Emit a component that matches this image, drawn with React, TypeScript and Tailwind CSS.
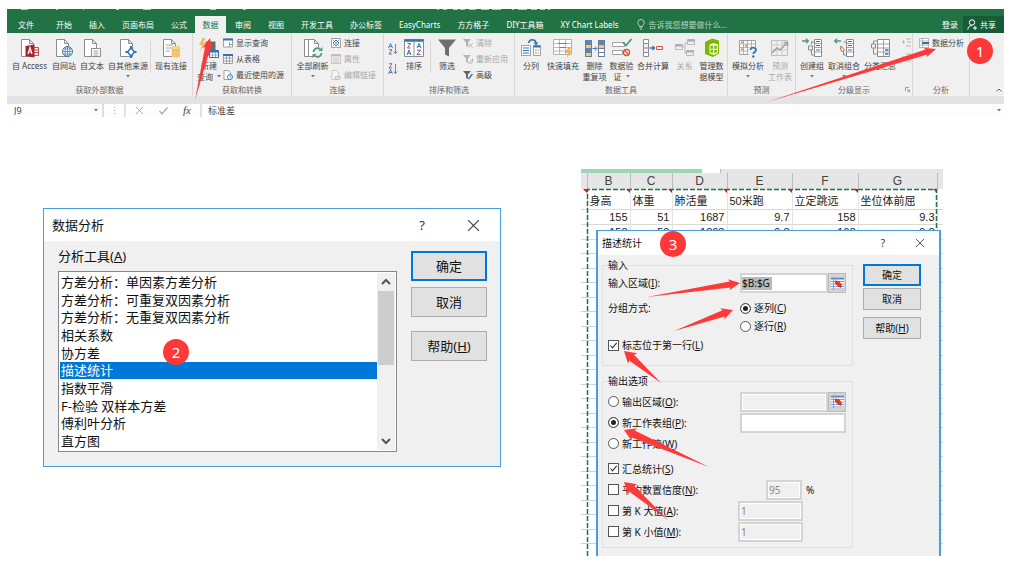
import React from "react";

const GREEN = "#217346";
const GREY = "#8c8c8c";
const BLUE = "#2f75b5";

/* ---------- annotations ---------- */

type ArrowProps = { x1: number; y1: number; x2: number; y2: number; size?: number };

function Arrow({ x1, y1, x2, y2, size = 1 }: ArrowProps) {
  const len = Math.hypot(x2 - x1, y2 - y1);
  const ux = (x2 - x1) / len;
  const uy = (y2 - y1) / len;
  const at = (back: number, side: number) =>
    `${(x2 - ux * back - uy * side).toFixed(1)},${(y2 - uy * back + ux * side).toFixed(1)}`;
  const points = [
    `${x1},${y1}`,
    at(10, 2.7 * size),
    at(11.5, 5 * size),
    `${x2},${y2}`,
    at(11.5, -5 * size),
    at(10, -2.7 * size),
  ].join(" ");
  return <polygon points={points} fill="#fc3a3a" />;
}

function Badge({ children, place }: { children: React.ReactNode; place: string }) {
  return (
    <span
      className={`absolute z-20 flex size-[26px] items-center justify-center rounded-full bg-[#fc3838] text-[15px] leading-none text-white ${place}`}
    >
      {children}
    </span>
  );
}

/* ---------- ribbon icons ---------- */

function Ic({ children }: { children: React.ReactNode }) {
  return (
    <svg viewBox="0 0 20 20" className="size-5 shrink-0" fill="none" aria-hidden="true">
      {children}
    </svg>
  );
}

function Sm({ children }: { children: React.ReactNode }) {
  return (
    <svg viewBox="0 0 10 10" className="size-[10px] shrink-0" fill="none" aria-hidden="true">
      {children}
    </svg>
  );
}

const Doc = () => (
  <path d="M2.500 1.500h8l4 4v13h-12zM10.500 1.500v4h4" fill="#fff" stroke={GREY} />
);

const icons = {
  access: (
    <Ic>
      <path d="M1.500 1.500h8l4 4v13h-12zM9.500 1.500v4h4" fill="#fff" stroke={GREY} />
      <path d="M14 9.500h4.500v8H14M14 12h4M14 14.500h4" stroke="#c0504d" />
      <path d="M5.500 8l9-1.500v13l-9-1.500z" fill="#a4262c" />
      <path d="M8 16l2-6.500 2 6.500M8.700 14h2.600" stroke="#fff" strokeWidth="1.200" />
    </Ic>
  ),
  web: (
    <Ic>
      <Doc />
      <circle cx="13.500" cy="13.500" r="5" fill="#fff" stroke={BLUE} />
      <path d="M8.500 13.500h10M13.500 8.500v10M9.500 11h8M9.500 16h8" stroke={BLUE} strokeWidth=".7" />
      <ellipse cx="13.500" cy="13.500" rx="2.400" ry="5" stroke={BLUE} strokeWidth=".7" />
    </Ic>
  ),
  text: (
    <Ic>
      <Doc />
      <path d="M9.500 10.500h9v8h-9z" fill="#fff" stroke={GREY} />
      <path d="M11.500 13h5M11.500 15h5M11.500 17h5" stroke={GREY} strokeWidth=".8" />
    </Ic>
  ),
  other: (
    <Ic>
      <Doc />
      <path d="M13 10l3.500 4-3.500 4-3.500-4z" fill="#fff" stroke={BLUE} strokeWidth="1.500" />
      <path d="M13 8v3M13 17v3M7.500 14h3M15.500 14h3" stroke={BLUE} strokeWidth="2" />
    </Ic>
  ),
  existing: (
    <Ic>
      <Doc />
      <path d="M5 7h7M5 10h5M5 13h4" stroke={GREY} strokeWidth=".8" />
      <path d="M10.500 10v8c0 2 8.500 2 8.500 0v-8z" fill="#f3c66b" />
      <ellipse cx="14.750" cy="10" rx="4.250" ry="1.700" fill="#f8dc9c" stroke="#e0ab3f" strokeWidth=".6" />
    </Ic>
  ),
  newQuery: (
    <Ic>
      <path d="M6.500 3.500h10v14h-10z" fill="#6b6b6b" />
      <path d="M3.500 0L0 7h3l-2 6 6-8H4l2.500-5z" fill="#f3b95f" />
      <path d="M10.500 12.500h9v7h-9z" fill="#fff" stroke={BLUE} />
      <path d="M10.500 13.500h9" stroke={BLUE} strokeWidth="2" />
      <path d="M13.500 14v5M16.500 14v5M11 17h8" stroke={GREY} strokeWidth=".7" />
    </Ic>
  ),
  refresh: (
    <Ic>
      <path d="M1.500 1.500h8v17h-8z" fill="#fff" stroke={GREY} />
      <path d="M5.500 1.500h6l4 4v13h-10zM11.500 1.500v4h4" fill="#fff" stroke={GREY} />
      <circle cx="14.500" cy="14.500" r="5" fill="#f0f0f0" />
      <path d="M10.500 14a4 4 0 0 1 7-2.500M18.500 15a4 4 0 0 1-7 2.500" stroke="#4a9b78" strokeWidth="1.600" />
      <path d="M19.500 9v4h-4zM9.500 20v-4h4z" fill="#4a9b78" />
    </Ic>
  ),
  sort: (
    <Ic>
      <path d="M.5 1.500h19v17H.5z" fill="#fff" stroke={GREY} />
      <path d="M.5 2.500h19" stroke={BLUE} strokeWidth="2.500" />
      <path d="M10 4v14" stroke={GREY} />
      <path d="M3.500 5.500h3L3.500 10h3M13 16.500h3.500M13 12.200h3.500L13 16.500" stroke="#8b4fa8" />
      <path d="M3 17l2-5 2 5M3.800 15.300h2.400M13 10l2-4.500 2 4.500M13.800 8.500h2.400" stroke={BLUE} />
    </Ic>
  ),
  filter: (
    <Ic>
      <path d="M1 1.500h18L12 10v8.500l-4-2V10z" fill="#6f6f6f" />
    </Ic>
  ),
  split: (
    <Ic>
      <path d="M.5 7.500h9v10h-9zM12.500 7.500h7v10h-7z" fill="#fff" stroke={GREY} strokeWidth=".8" />
      <path d="M2 10h6M2 12.500h6M2 15h6" stroke={BLUE} />
      <path d="M12.500 8.500h7" stroke={BLUE} strokeWidth="2" />
      <path d="M14 12h4M14 15h4" stroke={GREY} strokeDasharray="2 1" />
      <path d="M7.500 5c1-4.500 7-4 7.500 0" stroke={BLUE} strokeWidth="1.600" />
      <path d="M12.500 4.500h5L15 7.500z" fill={BLUE} />
    </Ic>
  ),
  flash: (
    <Ic>
      <path d="M.5 1.500h18v15H.5z" fill="#fff" stroke="#a0a0a0" strokeWidth=".8" />
      <path d="M.5 5.500h18M.5 9.500h18M.5 13h18M6.500 1.500v15M12.500 1.500v15" stroke="#a0a0a0" strokeWidth=".7" />
      <path d="M5 5.500h9M6.500 9.500h6" stroke="#4a9b78" />
      <path d="M15.500 9l-3.500 6h3l-1.500 5 5.500-7h-3l2.500-4z" fill="#f0b04c" />
    </Ic>
  ),
  dedupe: (
    <Ic>
      <path d="M0 2h7v17H0zM13 2h7v17h-7z" fill="#6c7f94" />
      <path d="M1 3h5v3H1zM14 3h5v3h-5zM1 11h5v3H1z" fill="#4a8bcb" />
      <path d="M1 7h5v3H1zM1 15h5v3H1zM14 7h5v3h-5z" fill="#f5c77a" />
      <path d="M14 11h5v3h-5zM14 15h5v3h-5z" fill="#fff" />
      <path d="M7.500 10.500h4M10 8.500l2 2-2 2" stroke={BLUE} />
    </Ic>
  ),
  validate: (
    <Ic>
      <path d="M.5 4.500h12v4H.5zM.5 12.500h10v4H.5z" fill="#fff" stroke={GREY} strokeWidth=".8" />
      <path d="M11 4.500l3 3L19.500 1" stroke="#4a9b78" strokeWidth="1.800" />
      <circle cx="14.500" cy="14.500" r="3" fill="#fff" stroke="#d9532c" strokeWidth="1.300" />
      <path d="M12.500 12.500l4 4" stroke="#d9532c" strokeWidth="1.300" />
    </Ic>
  ),
  merge: (
    <Ic>
      <path d="M.5 1.500h5v4h-5zM.5 14.500h5v4h-5z" fill="#fff" stroke={GREY} />
      <path d="M.5 5.500v9M5.500 5.500v9M.5 10h5" stroke={GREY} />
      <path d="M6.500 10h5M9.500 8l2 2-2 2" stroke={BLUE} strokeWidth="1.300" />
      <path d="M13.500 8.500h6v3h-6z" fill="#fff" stroke="#d9532c" />
    </Ic>
  ),
  relation: (
    <Ic>
      <path d="M.5 6.500h7v5h-7zM12.500 1.500h7v5h-7zM11.500 12.500h7v5h-7z" fill="#eee" stroke="#bcb8bc" />
      <path d="M.5 7.500h7M12.500 2.500h7M11.500 13.500h7" stroke="#b0aab0" strokeWidth="2" />
      <path d="M7.500 9H10V5h2.500M10 9v6h1.500" stroke="#bcb8bc" />
    </Ic>
  ),
  model: (
    <Ic>
      <path d="M3 4l7-3.500 7 2v13l-6 3.500-8-3z" fill="#7ab800" />
      <path d="M7.500 6.500l4.500-1.500 4 1.500v8.500l-4 2-4.500-1.500z" fill="#f4fbe6" />
      <path d="M8.500 7.700h2.500v3H8.500zM12.300 7.700h2.500v3h-2.500zM8.500 11.800h2.500v3H8.500zM12.300 11.800h2.500v3h-2.500z" fill="#7ab800" />
    </Ic>
  ),
  whatIf: (
    <Ic>
      <path d="M1.500 2.500h16v14h-16z" fill="#fff" stroke="#a0a0a0" />
      <path d="M1.500 6h16M1.500 9.500h16M1.500 13h16M5.500 2.500v14M9.500 2.500v14M13.500 2.500v14" stroke="#a0a0a0" strokeWidth=".8" />
      <path d="M3 4.300h2M7 7.800h2M3 11.300h2" stroke="#e0823c" strokeWidth="1.500" />
      <path d="M10.500 9.500h9.500v10.500h-9.500z" fill="#f0f0f0" />
      <path d="M12.500 12c0-3.500 5.500-3 5.500 0 0 2-2.700 2-2.700 4" stroke={BLUE} strokeWidth="1.800" />
      <circle cx="15.300" cy="18.500" r="1.200" fill={BLUE} />
    </Ic>
  ),
  forecast: (
    <Ic>
      <path d="M1.500 2.500h16v15h-16z" fill="#eee" stroke="#c0bcc0" />
      <path d="M1.500 7h16M1.500 12h16M7 2.500v15M12 2.500v15" stroke="#c8c4c8" strokeWidth=".8" />
      <path d="M2 15l5-5 3 2 7-7M13.500 4.500h4v4" stroke="#a29ea2" strokeWidth="1.500" />
    </Ic>
  ),
  group: (
    <Ic>
      <path d="M12.500 1.500h7v17h-7z" fill="#fff" stroke={GREY} />
      <path d="M12.500 5.500h7M12.500 9.500h7M12.500 14h7" stroke={GREY} strokeWidth=".8" />
      <path d="M14 3.500h4M14 7.500h4M14 12h4" stroke={BLUE} />
      <path d="M0 3h6M4 .8L6.300 3 4 5.200" stroke="#4a9b78" strokeWidth="1.300" />
      <path d="M9.500 3.500v3M9.500 12v5M6.500 8h4v4h-4zM9.500 4h3M9.500 17h3" stroke={GREY} />
    </Ic>
  ),
  ungroup: (
    <Ic>
      <path d="M12.500 1.500h7v17h-7z" fill="#fff" stroke={GREY} />
      <path d="M12.500 5.500h7M12.500 9.500h7M12.500 14h7" stroke={GREY} strokeWidth=".8" />
      <path d="M14 3.500h4M14 7.500h4M14 12h4" stroke={BLUE} />
      <path d="M7 3H1M3 .8L.7 3 3 5.200" stroke="#4a9b78" strokeWidth="1.300" />
      <path d="M9.500 4h3M9.500 17h3M9.500 13v4" stroke={GREY} />
      <path d="M7 8l3.500 4-2 2-2-3z" fill="#fff" stroke="#d9532c" />
    </Ic>
  ),
  subtotal: (
    <Ic>
      <path d="M7.500 1.500h12v17h-12z" fill="#fff" stroke={GREY} />
      <path d="M13.500 1.500v17M7.500 6h12M7.500 10h12M7.500 14h12" stroke={GREY} strokeWidth=".8" />
      <path d="M15 12h3.500M15 16h3.500" stroke={BLUE} strokeWidth="1.300" />
      <path d="M7.500 3h-4v3M3.500 10v6h4M1.500 6h4v4h-4z" stroke={GREY} />
    </Ic>
  ),
  bulb: (
    <svg viewBox="0 0 8 11" className="h-[11px] w-2" fill="none" aria-hidden="true">
      <path d="M2.500 7.500C2.500 6 .8 5.500.8 3.700a3.200 3.200 0 0 1 6.400 0C7.200 5.500 5.500 6 5.500 7.500zM2.700 9h2.600M3.200 10.300h1.600" stroke="#c4dccd" strokeWidth=".9" />
    </svg>
  ),
  showQuery: (
    <Sm>
      <path d="M.5 1h9v8h-9zM6.500 4v5M6.500 6.500h3" fill="#fff" stroke={GREY} strokeWidth=".8" />
      <path d="M0 1.500h10" stroke={BLUE} strokeWidth="2" />
    </Sm>
  ),
  fromTable: (
    <Sm>
      <path d="M.5.5h9v9h-9zM3.500 1v8.500M6.500 1v8.500M.5 4h9M.5 7h9" fill="#fff" stroke={GREY} strokeWidth=".8" />
      <path d="M0 1h10" stroke={BLUE} strokeWidth="2" />
    </Sm>
  ),
  recent: (
    <Sm>
      <path d="M1 .5h4.500L7.500 3v6.500H1z" fill="#fff" stroke={GREY} strokeWidth=".8" />
      <circle cx="7" cy="7" r="2.500" fill="#fff" stroke={BLUE} strokeWidth=".9" />
      <path d="M7 5.500V7h1.300" stroke={BLUE} strokeWidth=".7" />
    </Sm>
  ),
  connection: (
    <Sm>
      <path d="M.5.5h9v9h-9z" fill="#fff" stroke={GREY} strokeWidth=".8" />
      <path d="M5 2l3 3-3 3-3-3z" stroke={BLUE} />
      <path d="M2 2l6 6M8 2L2 8" stroke={BLUE} strokeWidth=".6" />
    </Sm>
  ),
  property: (
    <Sm>
      <path d="M.5.5h9v9h-9zM2 4h6M2 6h6M2 8h6" fill="#f4f0f4" stroke="#bdb6bd" strokeWidth=".8" />
      <path d="M.5 1.500h9" stroke="#bdb6bd" strokeWidth="1.500" />
    </Sm>
  ),
  editLink: (
    <Sm>
      <path d="M1 .5h4.500L7.500 3v6.500H1z" fill="#f6f6f6" stroke="#c0c0c0" strokeWidth=".8" />
      <path d="M4.500 6.500h4.500v2.500H4.500z" fill="#eee" stroke="#b4b4b4" strokeWidth=".8" />
    </Sm>
  ),
  clear: (
    <Sm>
      <path d="M0 1h8L5 4.500V9L3 8V4.500z" fill="#b5b0b5" />
      <path d="M5.500 5.500l4 4M9.500 5.500l-4 4" stroke="#b5b0b5" />
    </Sm>
  ),
  reapply: (
    <Sm>
      <path d="M0 1h8L5 4.500V9L3 8V4.500z" fill="#b9b4b9" />
      <path d="M5 7.500a2.200 2.200 0 1 0 4-1.500M9.500 4.500V7H7" stroke="#b5b0b5" />
    </Sm>
  ),
  advanced: (
    <Sm>
      <path d="M0 1h8L5 4.500V9L3 8V4.500z" fill="#666" />
      <path d="M9.500 4L5.500 9" stroke={BLUE} strokeWidth="1.500" />
    </Sm>
  ),
  analysis: (
    <Sm>
      <path d="M.5.5h9v9h-9zM3.500.5v9M.5 3h9M.5 7h9" fill="#fff" stroke="#a8a8a8" strokeWidth=".8" />
      <path d="M3 5h7" stroke={BLUE} strokeWidth="2" />
    </Sm>
  ),
};

function SortAz({ reverse }: { reverse?: boolean }) {
  const a = <path d="M.5 5L2.500.5 4.500 5M1.300 3.500h2.400" stroke={BLUE} strokeWidth=".9" />;
  const z = <path d="M1 .7h3L1 5h3.200" stroke="#8b4fa8" strokeWidth=".9" />;
  return (
    <button aria-label={reverse ? "降序" : "升序"} className="flex h-5 w-[10px] items-center">
      <svg viewBox="0 0 10 12" className="h-3 w-[10px]" fill="none">
        {reverse ? z : a}
        <g transform="translate(0 6)">{reverse ? a : z}</g>
        <path d="M7.500 1v9.500M5.700 8.500l1.800 2 1.800-2" stroke="#777" strokeWidth=".9" />
      </svg>
    </button>
  );
}

/* ---------- ribbon parts ---------- */

function Caret() {
  return (
    <svg viewBox="0 0 4 3" className="inline-block h-[3px] w-1" aria-hidden="true">
      <path d="M0 0h4L2 2.500z" fill="#777" />
    </svg>
  );
}

type BigProps = { icon: React.ReactNode; lines: string[]; w: string; caret?: boolean; disabled?: boolean };

function Big({ icon, lines, w, caret, disabled }: BigProps) {
  return (
    <button
      disabled={disabled}
      className={`flex shrink-0 flex-col items-center pt-[5px] leading-[11px] whitespace-nowrap disabled:text-[#a9a9a9] ${w}`}
    >
      {icon}
      <span className="mt-[2px]">{lines[0]}</span>
      <span className="flex h-[11px] items-center gap-1">
        {lines[1]}
        {caret && <Caret />}
      </span>
    </button>
  );
}

function Row({ icon, text, disabled }: { icon: React.ReactNode; text: string; disabled?: boolean }) {
  return (
    <button
      disabled={disabled}
      className="flex h-4 items-center gap-[3px] whitespace-nowrap disabled:text-[#a9a9a9]"
    >
      {icon}
      {text}
    </button>
  );
}

function Group({ label, children, launcher }: { label: string; children: React.ReactNode; launcher?: boolean }) {
  return (
    <section aria-label={label} className="flex min-w-0 flex-col border-r border-[#d8d8d8]">
      <div className="flex h-[50px] pl-[2px]">{children}</div>
      <div className="relative h-[13px] text-center leading-[13px] text-[#666]">
        {label}
        {launcher && (
          <svg viewBox="0 0 5 5" className="absolute right-[2px] bottom-1 size-[5px]" fill="none">
            <path d="M.5 4V.5H4M2 2l2.500 2.500M4.500 2.500v2h-2" stroke="#888" strokeWidth=".8" />
          </svg>
        )}
      </div>
    </section>
  );
}

const Sep = () => <span className="mt-2 h-8 w-px shrink-0 bg-[#d8d8d8]" />;

const tabs = [
  "开始", "插入", "页面布局", "公式", "数据", "审阅", "视图", "开发工具",
  "办公标签", "EasyCharts", "方方格子", "DIY工具箱", "XY Chart Labels",
];

function Ribbon() {
  return (
    <header className="relative text-[8px] text-[#444]">
      <div className="bg-[#217346] text-white">
        <svg viewBox="0 0 997 7" className="h-[7px] w-full" preserveAspectRatio="xMinYMin slice" aria-hidden="true">
          <path d="M14 0h7v1h-7zM49 0h2v1h-2zM76 0h1v1h-1zM109 0h3v1h-3zM136 0h8v1h-8zM203 0h6v1h-6zM236 0h3v1h-3zM430 0h2v1h-2zM436 0h4v1h-4zM446 0h5v1h-5zM453 0h5v1h-5zM462 0h7v1h-7zM474 0h8v1h-8zM485 0h9v1h-9zM505 0h2v1h-2zM511 0h9v1h-9zM524 0h6v1h-6zM533 0h5v1h-5zM541 0h2v1h-2z" fill="#a9cdb8" />
        </svg>
        <div className="flex h-[17px] items-stretch justify-between whitespace-nowrap">
          <nav className="flex items-center pl-[11px]">
            <button className="mr-[13px]">文件</button>
            {tabs.map((t) =>
              t === "数据" ? (
                <button key={t} aria-current="page" className="h-full w-[31px] bg-[#f0f0f0] text-[#217346]">
                  {t}
                </button>
              ) : (
                <button key={t} className="ml-px px-2">
                  {t}
                </button>
              ),
            )}
            <label className="ml-[10px] flex items-center gap-1">
              {icons.bulb}
              <input
                placeholder="告诉我您想要做什么..."
                className="w-24 bg-transparent outline-none placeholder:text-[#b9d5c5]"
              />
            </label>
          </nav>
          <div className="flex items-stretch">
            <button className="px-[5px]">登录</button>
            <button className="flex items-center gap-[3px] bg-[#185c37] pr-2 pl-1">
              <svg viewBox="0 0 10 11" className="h-[11px] w-[10px]" fill="none">
                <circle cx="5" cy="3.500" r="2.700" stroke="#fff" />
                <path d="M.8 10.500c0-2.500 2-4 4.200-4M6 9h4M8 7v4" stroke="#fff" />
              </svg>
              共享
            </button>
          </div>
        </div>
      </div>

      <div className="grid h-[63px] grid-cols-[186fr_99fr_92fr_131fr_213fr_68fr_117fr_57fr_34fr] bg-[#f0f0f0]">
        <Group label="获取外部数据">
          <Big icon={icons.access} lines={["自 Access"]} w="w-[41px]" />
          <Big icon={icons.web} lines={["自网站"]} w="w-7" />
          <Big icon={icons.text} lines={["自文本"]} w="w-7" />
          <Big icon={icons.other} lines={["自其他来源"]} w="w-11" caret />
          <Sep />
          <Big icon={icons.existing} lines={["现有连接"]} w="w-10" />
        </Group>
        <Group label="获取和转换">
          <Big icon={icons.newQuery} lines={["新建", "查询"]} w="w-7" caret />
          <div className="pt-[2px]">
            <Row icon={icons.showQuery} text="显示查询" />
            <Row icon={icons.fromTable} text="从表格" />
            <Row icon={icons.recent} text="最近使用的源" />
          </div>
        </Group>
        <Group label="连接">
          <Big icon={icons.refresh} lines={["全部刷新"]} w="w-[37px]" caret />
          <div className="pt-[2px]">
            <Row icon={icons.connection} text="连接" />
            <Row icon={icons.property} text="属性" disabled />
            <Row icon={icons.editLink} text="编辑链接" disabled />
          </div>
        </Group>
        <Group label="排序和筛选">
          <div className="flex flex-col pt-[6px] pl-[2px]">
            <SortAz />
            <SortAz reverse />
          </div>
          <Big icon={icons.sort} lines={["排序"]} w="w-8" />
          <Sep />
          <Big icon={icons.filter} lines={["筛选"]} w="w-8" />
          <div className="pt-[2px]">
            <Row icon={icons.clear} text="清除" disabled />
            <Row icon={icons.reapply} text="重新应用" disabled />
            <Row icon={icons.advanced} text="高级" />
          </div>
        </Group>
        <Group label="数据工具">
          <Big icon={icons.split} lines={["分列"]} w="w-7" />
          <Big icon={icons.flash} lines={["快速填充"]} w="w-9" />
          <Big icon={icons.dedupe} lines={["删除", "重复项"]} w="w-[27px]" />
          <Big icon={icons.validate} lines={["数据验", "证"]} w="w-[27px]" caret />
          <Big icon={icons.merge} lines={["合并计算"]} w="w-9" />
          <Big icon={icons.relation} lines={["关系"]} w="w-[27px]" disabled />
          <Big icon={icons.model} lines={["管理数", "据模型"]} w="w-[27px]" />
        </Group>
        <Group label="预测">
          <Big icon={icons.whatIf} lines={["模拟分析"]} w="w-9" caret />
          <Big icon={icons.forecast} lines={["预测", "工作表"]} w="w-7" disabled />
        </Group>
        <Group label="分级显示" launcher>
          <Big icon={icons.group} lines={["创建组"]} w="w-7" caret />
          <Big icon={icons.ungroup} lines={["取消组合"]} w="w-9" caret />
          <Big icon={icons.subtotal} lines={["分类汇总"]} w="w-9" />
          <svg viewBox="0 0 9 24" className="mt-[5px] ml-1 h-6 w-[9px]" fill="none" aria-hidden="true">
            <path d="M4 1h5M5 4h4M4 8h5M0 4h3M1.500 2.500v3M4 16h5M5 19h4M4 23h5M0 19h3" stroke="#aaa" strokeWidth=".9" />
          </svg>
        </Group>
        <Group label="分析">
          <div className="pt-[2px] pl-1">
            <Row icon={icons.analysis} text="数据分析" />
          </div>
        </Group>
        <div className="flex items-end justify-end pr-[2px] pb-1">
          <svg viewBox="0 0 6 4" className="h-1 w-[6px]" fill="none" aria-hidden="true">
            <path d="M.5 3.500L3 1l2.500 2.500" stroke="#666" />
          </svg>
        </div>
      </div>

      <div className="h-2 bg-[#e4e4e4]" />
      <div className="flex h-[13px] items-center overflow-hidden bg-[#fdfdfd] text-[9px] leading-[13px]">
        <div className="flex h-full w-[97px] items-center border-r-2 border-[#dedede] pr-1 pl-[7px]">
          <input aria-label="名称框" defaultValue="J9" className="w-0 flex-1 bg-transparent outline-none" />
          <Caret />
        </div>
        <span className="w-5 text-center text-[#999]">⋮</span>
        <div className="flex h-full items-center justify-around border-x-2 border-[#e2e2e2] px-[1px]">
          <button aria-label="取消" className="w-6">
            <svg viewBox="0 0 9 9" className="mx-auto size-[9px]" fill="none">
              <path d="M1 1l7 7M8 1L1 8" stroke="#aaa" />
            </svg>
          </button>
          <button aria-label="输入" className="w-6">
            <svg viewBox="0 0 9 9" className="mx-auto size-[9px]" fill="none">
              <path d="M.5 5l2.500 3 5.500-6.500" stroke="#aaa" strokeWidth="1.300" />
            </svg>
          </button>
          <button className="w-6 font-['Liberation_Serif',serif] text-[11px] italic">fx</button>
        </div>
        <input
          aria-label="编辑栏"
          defaultValue="标准差"
          className="w-0 flex-1 bg-transparent pl-[6px] outline-none"
        />
        <span className="flex items-center pr-[3px]">
          <Caret />
        </span>
      </div>

      <svg viewBox="7 9 997 108" className="pointer-events-none absolute top-0 left-0 z-10 h-[108px] w-[997px]" aria-hidden="true">
        <Arrow x1={195} y1={100} x2={210} y2={38} />
        <Arrow x1={767} y1={102} x2={936} y2={49} />
      </svg>
      <Badge place="top-[29px] right-[11px]">1</Badge>
    </header>
  );
}

/* ---------- dialogs ---------- */

function TitleIcons({ gap }: { gap: string }) {
  return (
    <div className={`flex items-center text-[#333] ${gap}`}>
      <button aria-label="帮助">?</button>
      <button aria-label="关闭">
        <svg viewBox="0 0 12 12" className="size-[1em]" fill="none">
          <path d="M1 1l10 10M11 1L1 11" stroke="#444" strokeWidth="1.100" />
        </svg>
      </button>
    </div>
  );
}

const tools = [
  "方差分析：单因素方差分析",
  "方差分析：可重复双因素分析",
  "方差分析：无重复双因素分析",
  "相关系数",
  "协方差",
  "描述统计",
  "指数平滑",
  "F-检验 双样本方差",
  "傅利叶分析",
  "直方图",
];

const okBtn = "border-2 border-[#0078d7] bg-[#e1e1e1]";
const plainBtn = "border border-[#adadad] bg-[#e1e1e1]";

function AnalysisDialog() {
  return (
    <section
      aria-label="数据分析"
      className="relative mt-[91px] max-w-[458px] flex-1 self-start border border-[#4a9ee0] bg-[#f0f0f0] text-[13px] leading-4 text-[#111]"
    >
      <div className="flex h-8 items-center justify-between bg-white pr-5 pl-2">
        <h2>数据分析</h2>
        <TitleIcons gap="gap-[42px]" />
      </div>
      <div className="flex gap-[14px] pt-[7px] pr-[13px] pb-[14px] pl-[14px]">
        <div className="flex-1">
          <p id="tools-label" className="mb-[7px]">
            分析工具(<u>A</u>)
          </p>
          <div className="flex border border-[#828790] bg-white p-px">
            <ul role="listbox" aria-labelledby="tools-label" className="flex h-[177px] flex-1 flex-col">
              {tools.map((t) => (
                <li
                  key={t}
                  role="option"
                  aria-selected={t === "描述统计"}
                  className="flex flex-1 items-center pl-px whitespace-nowrap aria-selected:bg-[#0078d7] aria-selected:text-white"
                >
                  {t}
                </li>
              ))}
            </ul>
            <div className="flex w-[18px] flex-col items-center bg-[#f0f0f0]" aria-hidden="true">
              <svg viewBox="0 0 18 18" className="size-[18px]" fill="none">
                <path d="M5 11l4-4 4 4" stroke="#555" strokeWidth="2" />
              </svg>
              <div className="h-[74px] w-4 bg-[#cdcdcd]" />
              <svg viewBox="0 0 18 18" className="mt-auto size-[18px]" fill="none">
                <path d="M5 7l4 4 4-4" stroke="#555" strokeWidth="2" />
              </svg>
            </div>
          </div>
        </div>
        <div className="flex w-[76px] flex-col pt-[3px]">
          <button className={`h-[30px] ${okBtn}`}>确定</button>
          <button className={`mt-[6px] h-[30px] ${plainBtn}`}>取消</button>
          <button className={`mt-[14px] h-[30px] ${plainBtn}`}>
            帮助(<u>H</u>)
          </button>
        </div>
      </div>
      <Badge place="top-[130px] left-[119px]">2</Badge>
    </section>
  );
}

function Key({ text, k, end = "" }: { text: string; k: string; end?: string }) {
  return (
    <>
      {text}(<u>{k}</u>){end}
    </>
  );
}

function Radio({ name, checked, children }: { name: string; checked?: boolean; children: React.ReactNode }) {
  return (
    <label className="flex items-center gap-[3px] whitespace-nowrap">
      <input
        type="radio"
        name={name}
        defaultChecked={checked}
        className="size-[11px] appearance-none rounded-full border border-[#555] bg-white checked:bg-[#222] checked:shadow-[inset_0_0_0_2px_#fff]"
      />
      {children}
    </label>
  );
}

function Check({ checked, children }: { checked?: boolean; children: React.ReactNode }) {
  return (
    <label className="flex items-center gap-[3px] whitespace-nowrap">
      <span className="grid">
        <input
          type="checkbox"
          defaultChecked={checked}
          className="peer size-[11px] appearance-none border border-[#555] bg-white [grid-area:1/1]"
        />
        <svg viewBox="0 0 11 11" className="pointer-events-none hidden size-[11px] [grid-area:1/1] peer-checked:block" fill="none">
          <path d="M2.500 5.500l2 2.300 4.200-5" stroke="#333" strokeWidth="1.100" />
        </svg>
      </span>
      {children}
    </label>
  );
}

function RefPicker() {
  return (
    <button aria-label="选择区域" className="flex w-[18px] items-center justify-center border border-[#bbb] bg-[#d4d4d4]">
      <svg viewBox="0 0 13 13" className="size-[13px]" fill="none">
        <path d="M0 0h13v13H0z" fill="#fff" />
        <path d="M0 .5h13v2H0z" fill="#5b84cf" />
        <path d="M0 4.500h13M0 7h13M0 9.500h13M0 12h13M2.500 0v13" stroke="#7f9fda" />
        <path d="M4 3.500l4 .5 3 4-1 3-3-1.500-3-3z" fill="#dd3b24" />
      </svg>
    </button>
  );
}

const box = "border-2 border-[#d4d4d4] bg-white outline-none";
const dimBox = "border-2 border-[#d4d4d4] bg-[#f0f0f0] pl-[1px] text-[#888] shadow-[inset_0_0_0_1px_#fff] outline-none";

function StatsDialog() {
  return (
    <section
      aria-label="描述统计"
      className="relative z-10 mt-[61px] mr-[2px] ml-[15px] min-h-[340px] self-start border-x-2 border-t border-[#4a9ee0] bg-[#f0f0f0] text-[10px] leading-3 text-[#111] [grid-area:1/1]"
    >
      <div className="flex h-6 items-center justify-between bg-white pr-[14px] pl-1">
        <h2>描述统计</h2>
        <TitleIcons gap="gap-[30px]" />
      </div>
      <div className="flex gap-[10px] pt-1 pr-[18px] pl-1">
        <div className="flex-1">
          <fieldset className="h-[107px] border border-[#e0e0e0] pr-1 pl-[5px]">
            <legend>输入</legend>
            <div className="mt-[2px] flex h-5 items-center justify-between pr-[2px]">
              <label htmlFor="input-range">
                <Key text="输入区域" k="I" end=":" />
              </label>
              <div className="flex h-5 w-[106px]">
                <div className={`flex flex-1 items-center ${box}`}>
                  <input
                    id="input-range"
                    defaultValue="$B:$G"
                    className="h-[13px] w-[30px] bg-[#b8b8b8] outline-none"
                  />
                </div>
                <RefPicker />
              </div>
            </div>
            <div className="mt-[6px] flex justify-between" role="radiogroup" aria-labelledby="group-by">
              <span id="group-by" className="leading-[18px]">分组方式:</span>
              <div className="flex w-[108px] flex-col">
                <div className="flex h-[18px]">
                  <Radio name="by" checked>
                    <span><Key text="逐列" k="C" /></span>
                  </Radio>
                </div>
                <div className="flex h-[18px]">
                  <Radio name="by">
                    <span><Key text="逐行" k="R" /></span>
                  </Radio>
                </div>
              </div>
            </div>
            <div className="mt-px flex h-[18px]">
              <Check checked>
                <span><Key text="标志位于第一行" k="L" /></span>
              </Check>
            </div>
          </fieldset>

          <fieldset className="mt-[9px] h-[173px] border border-[#e0e0e0] pr-1 pl-[5px]">
            <legend>输出选项</legend>
            <div className="mt-1 flex h-[21px] items-center justify-between pr-[2px]">
              <Radio name="out">
                <span><Key text="输出区域" k="O" end=":" /></span>
              </Radio>
              <div className="flex h-5 w-[106px]">
                <input aria-label="输出区域" disabled className={`w-0 flex-1 ${dimBox}`} />
                <RefPicker />
              </div>
            </div>
            <div className="flex h-[21px] items-center justify-between pr-[2px]">
              <Radio name="out" checked>
                <span><Key text="新工作表组" k="P" end=":" /></span>
              </Radio>
              <input aria-label="新工作表组名称" className={`h-5 w-[106px] ${box}`} />
            </div>
            <div className="flex h-[21px]">
              <Radio name="out">
                <span><Key text="新工作簿" k="W" /></span>
              </Radio>
            </div>
            <div className="mt-1 flex h-[21px]">
              <Check checked>
                <span><Key text="汇总统计" k="S" /></span>
              </Check>
            </div>
            <div className="flex h-[21px] items-center justify-between">
              <Check>
                <span><Key text="平均数置信度" k="N" end=":" /></span>
              </Check>
              <div className="flex w-[82px] items-center gap-1">
                <input aria-label="平均数置信度百分比" disabled defaultValue="95" className={`h-5 w-9 ${dimBox}`} />%
              </div>
            </div>
            <div className="flex h-[21px] items-center justify-between pr-[45px]">
              <Check>
                <span><Key text="第 K 大值" k="A" end=":" /></span>
              </Check>
              <input aria-label="第 K 大值" disabled defaultValue="1" className={`h-5 w-[65px] ${dimBox}`} />
            </div>
            <div className="flex h-[21px] items-center justify-between pr-[45px]">
              <Check>
                <span><Key text="第 K 小值" k="M" end=":" /></span>
              </Check>
              <input aria-label="第 K 小值" disabled defaultValue="1" className={`h-5 w-[65px] ${dimBox}`} />
            </div>
          </fieldset>
        </div>
        <div className="flex w-[58px] flex-col pt-[5px]">
          <button className={`h-[22px] ${okBtn}`}>确定</button>
          <button className={`mt-[2px] h-[22px] ${plainBtn}`}>取消</button>
          <button className={`mt-[7px] h-[22px] ${plainBtn}`}>
            帮助(<u>H</u>)
          </button>
        </div>
      </div>
      <Badge place="top-0 left-[62px]">3</Badge>
    </section>
  );
}

const columns = [
  { id: "B", name: "身高", values: ["155", "158"] },
  { id: "C", name: "体重", values: ["51", "50"] },
  { id: "D", name: "肺活量", values: ["1687", "1868"] },
  { id: "E", name: "50米跑", values: ["9.7", "9.8"] },
  { id: "F", name: "立定跳远", values: ["158", "168"] },
  { id: "G", name: "坐位体前屈", values: ["9.3", "9.8"] },
];

const blankRows = Array.from({ length: 22 }, (_, i) => i);

const Note = () => (
  <svg viewBox="0 0 4 4" className="absolute top-0 right-0 size-1" aria-hidden="true">
    <path d="M0 0h4v4z" fill="#f00" />
  </svg>
);

function Sheet() {
  return (
    <div className="relative self-start [grid-area:1/1]">
      <div className="flex h-1 gap-[18px]" aria-hidden="true">
        <div className="w-[121px] bg-[#9fd5b7]" />
        <div className="flex-1 border-l border-[#bbb] bg-[#e6e6e6]" />
      </div>
      <table className="w-full table-fixed border-collapse font-['Liberation_Sans','Noto_Sans_CJK_SC',sans-serif] text-[11px] leading-[14px] text-[#222]">
        <colgroup>
          <col className="w-[6px]" />
          <col className="w-[43px]" />
          <col className="w-[42px]" />
          <col className="w-[55px]" />
          <col className="w-[65px]" />
          <col className="w-[66px]" />
          <col className="w-[79px]" />
          <col className="w-[6px]" />
        </colgroup>
        <thead>
          <tr className="h-4 bg-[#e6e6e6] text-[#444]">
            <td />
            {columns.map((c) => (
              <th key={c.id} className="border-x border-[#bbb] p-0 text-[12px] font-normal">
                {c.id}
              </th>
            ))}
            <td />
          </tr>
        </thead>
        <tbody>
          <tr className="h-5 border-b border-[#d9d9d9]">
            <td className="relative"><Note /></td>
            {columns.map((c) => (
              <td key={c.id} className="relative overflow-visible border-x border-[#e3e3e3] p-0 pt-[5px] pl-[2px] whitespace-nowrap">
                {c.name}
                <Note />
              </td>
            ))}
            <td />
          </tr>
          {[0, 1].map((r) => (
            <tr key={r} className="h-[15px] border-b border-[#d9d9d9]">
              <td />
              {columns.map((c) => (
                <td key={c.id} className="border-x border-[#e3e3e3] p-0 pr-[2px] text-right">
                  {c.values[r]}
                </td>
              ))}
              <td />
            </tr>
          ))}
          {blankRows.map((r) => (
            <tr key={r} className="border-b border-[#d0d0d0] odd:h-[15px] even:h-[14px]">
              <td colSpan={8} className="p-0" />
            </tr>
          ))}
        </tbody>
      </table>
      <svg viewBox="0 0 362 387" className="pointer-events-none absolute inset-0 h-[387px] w-full" fill="none" preserveAspectRatio="none" aria-hidden="true">
        <path d="M6.500 387V20.500h349V387" stroke={GREEN} strokeWidth="1.500" strokeDasharray="5 2" />
      </svg>
    </div>
  );
}

function StatsPanel() {
  return (
    <div className="relative mt-[52px] grid h-[387px] max-w-[362px] flex-1 overflow-hidden">
      <Sheet />
      <StatsDialog />
      <svg viewBox="581 169 362 387" className="pointer-events-none absolute top-0 left-0 z-20 h-[387px] w-[362px]" aria-hidden="true">
        <Arrow x1={647} y1={297} x2={740} y2={283} size={1.1} />
        <Arrow x1={674} y1={331} x2={733} y2={310} size={1.2} />
        <Arrow x1={661} y1={383} x2={624} y2={351} size={1.4} />
        <Arrow x1={709} y1={467} x2={624} y2={430} size={1.4} />
        <Arrow x1={668} y1={520} x2={624} y2={482} size={1.4} />
      </svg>
    </div>
  );
}

export default function App() {
  return (
    <div className="bg-white pt-[9px] pr-3 pl-[7px] font-['Noto_Sans','Noto_Sans_CJK_SC',sans-serif]">
      <Ribbon />
      <main className="flex justify-between gap-5 pr-[61px] pl-9">
        <AnalysisDialog />
        <StatsPanel />
      </main>
    </div>
  );
}
